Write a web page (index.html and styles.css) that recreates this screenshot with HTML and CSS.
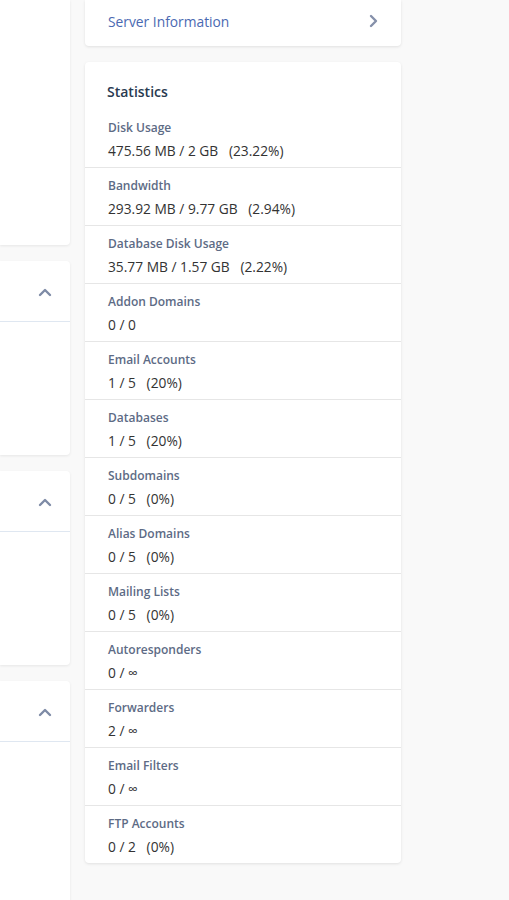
FILE: index.html
```html
<!DOCTYPE html>
<html lang="en">
<head>
<meta charset="utf-8">
<title>Statistics</title>
<link rel="stylesheet" href="styles.css">
</head>
<body>
<div class="page">
  <div class="col-left">
    <div class="lcard lcard-first"></div>
    <div class="lcard">
      <div class="lcard-head">
        <svg class="chev-up" width="14" height="9" viewBox="0 0 14 9"><path d="M2 7 L7 2 L12 7" fill="none" stroke="#7e8ba6" stroke-width="2.4" stroke-linecap="round" stroke-linejoin="round"/></svg>
      </div>
      <div class="lcard-body"></div>
    </div>
    <div class="lcard">
      <div class="lcard-head">
        <svg class="chev-up" width="14" height="9" viewBox="0 0 14 9"><path d="M2 7 L7 2 L12 7" fill="none" stroke="#7e8ba6" stroke-width="2.4" stroke-linecap="round" stroke-linejoin="round"/></svg>
      </div>
      <div class="lcard-body"></div>
    </div>
    <div class="lcard lcard-last">
      <div class="lcard-head">
        <svg class="chev-up" width="14" height="9" viewBox="0 0 14 9"><path d="M2 7 L7 2 L12 7" fill="none" stroke="#7e8ba6" stroke-width="2.4" stroke-linecap="round" stroke-linejoin="round"/></svg>
      </div>
      <div class="lcard-body"></div>
    </div>
  </div>
  <div class="col-right">
    <div class="card server-card">
      <a class="server-link" href="#">Server Information</a>
      <svg class="chev-right" width="9" height="14" viewBox="0 0 9 14"><path d="M2 2 L7 7 L2 12" fill="none" stroke="#8590aa" stroke-width="2.4" stroke-linecap="round" stroke-linejoin="round"/></svg>
    </div>
    <div class="card stats-card">
      <div class="stats-title">Statistics</div>
      <div class="stat"><div class="stat-label">Disk Usage</div><div class="stat-value">475.56 MB / 2 GB &nbsp; (23.22%)</div></div>
      <div class="stat"><div class="stat-label">Bandwidth</div><div class="stat-value">293.92 MB / 9.77 GB &nbsp; (2.94%)</div></div>
      <div class="stat"><div class="stat-label">Database Disk Usage</div><div class="stat-value">35.77 MB / 1.57 GB &nbsp; (2.22%)</div></div>
      <div class="stat"><div class="stat-label">Addon Domains</div><div class="stat-value">0 / 0</div></div>
      <div class="stat"><div class="stat-label">Email Accounts</div><div class="stat-value">1 / 5 &nbsp; (20%)</div></div>
      <div class="stat"><div class="stat-label">Databases</div><div class="stat-value">1 / 5 &nbsp; (20%)</div></div>
      <div class="stat"><div class="stat-label">Subdomains</div><div class="stat-value">0 / 5 &nbsp; (0%)</div></div>
      <div class="stat"><div class="stat-label">Alias Domains</div><div class="stat-value">0 / 5 &nbsp; (0%)</div></div>
      <div class="stat"><div class="stat-label">Mailing Lists</div><div class="stat-value">0 / 5 &nbsp; (0%)</div></div>
      <div class="stat"><div class="stat-label">Autoresponders</div><div class="stat-value">0 / ∞</div></div>
      <div class="stat"><div class="stat-label">Forwarders</div><div class="stat-value">2 / ∞</div></div>
      <div class="stat"><div class="stat-label">Email Filters</div><div class="stat-value">0 / ∞</div></div>
      <div class="stat"><div class="stat-label">FTP Accounts</div><div class="stat-value">0 / 2 &nbsp; (0%)</div></div>
    </div>
  </div>
</div>
</body>
</html>
```

FILE: styles.css
```css
* { box-sizing: border-box; }
html, body {
  margin: 0;
  padding: 0;
  background: #f9f9f9;
  font-family: "Open Sans", "Liberation Sans", sans-serif;
  height: 900px;
  overflow: hidden;
}
.page {
  display: flex;
  gap: 15px;
  align-items: flex-start;
}
.col-left {
  width: 70px;
  display: flex;
  flex-direction: column;
  gap: 16px;
}
.lcard {
  background: #fff;
  border-radius: 0 4px 4px 0;
  box-shadow: 0 1px 3px rgba(0, 0, 0, 0.08);
  height: 194px;
  overflow: hidden;
}
.lcard-first {
  height: 245px;
  border-radius: 0 0 4px 0;
}
.lcard-last {
  height: 260px;
  border-radius: 0 4px 0 0;
}
.lcard-head {
  height: 61px;
  border-bottom: 1px solid #dfe7f1;
  display: flex;
  align-items: center;
  padding-left: 38px;
  padding-top: 2px;
}
.chev-up { display: block; }
.col-right {
  width: 316px;
  display: flex;
  flex-direction: column;
  gap: 16px;
}
.card {
  background: #fff;
  border-radius: 4px;
  box-shadow: 0 1px 3px rgba(0, 0, 0, 0.1);
}
.server-card {
  height: 46px;
  border-radius: 0 0 4px 4px;
  display: flex;
  align-items: center;
  justify-content: space-between;
  padding: 0 23px 4px 23px;
}
.server-link {
  color: #4a69b2;
  font-size: 13.8px;
  text-decoration: none;
}
.chev-right { display: block; }
.stats-title {
  padding: 20px 22px 8px;
  line-height: 20px;
  font-size: 14px;
  font-weight: 600;
  color: #293a50;
}
.stat {
  padding: 8px 22px 0 23px;
  height: 58px;
  border-bottom: 1px solid #e6e6e6;
}
.stat:last-child {
  border-bottom: none;
  height: 57px;
}
.stat-label {
  font-size: 12px;
  font-weight: 600;
  line-height: 20px;
  color: #5d6b85;
}
.stat-value {
  margin-top: 3px;
  font-size: 13.75px;
  line-height: 20px;
  color: #333;
  white-space: pre;
}
```
